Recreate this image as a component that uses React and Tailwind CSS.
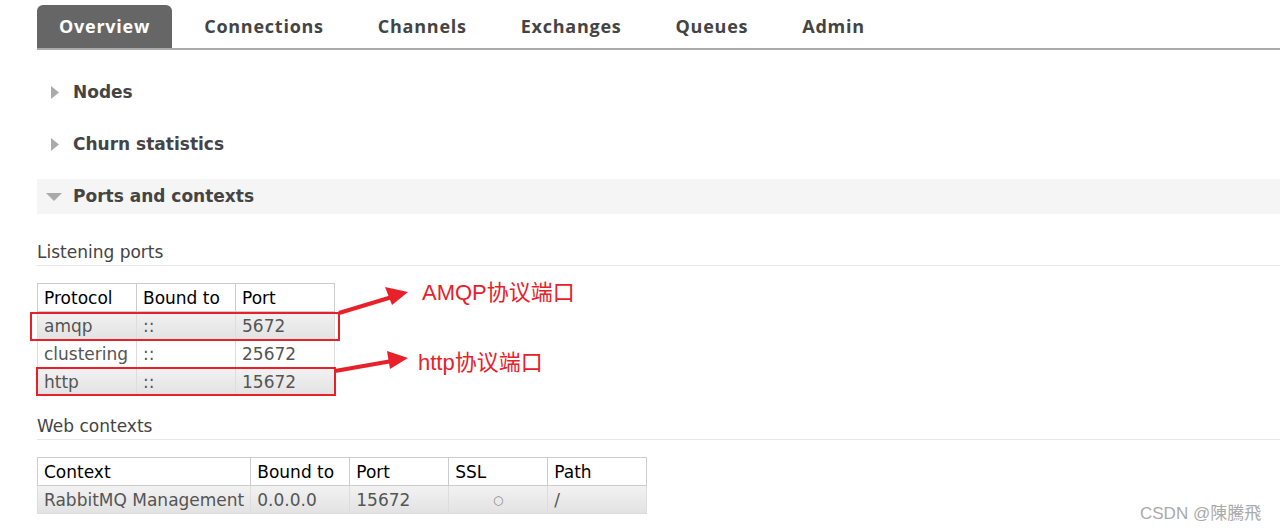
import React from 'react';

const tabs = ['Overview', 'Connections', 'Channels', 'Exchanges', 'Queues', 'Admin'];

const ports = [
    { protocol: 'amqp', bound: '::', port: '5672' },
    { protocol: 'clustering', bound: '::', port: '25672' },
    { protocol: 'http', bound: '::', port: '15672' },
];

// right / down pointing triangles used by the collapsible sections
const Arrow = ({ open }) => (
    open ? (
        <svg width="18" height="10" viewBox="0 0 18 10" className="mr-[10px] ml-[8px]">
            <polygon points="1,1 17,1 9,9" fill="#aaa" />
        </svg>
    ) : (
        <svg width="10" height="15" viewBox="0 0 10 15" className="mr-[13px] ml-[13px]">
            <polygon points="1,1 9,7.5 1,14" fill="#aaa" />
        </svg>
    )
);

const Section = ({ title, open }) => (
    <div className={`flex items-center h-[35px] ${open ? 'bg-[#f5f5f5]' : ''}`}>
        <Arrow open={open} />
        <span className="text-[17px] font-bold text-[#444]">{title}</span>
    </div>
);

const rowBg = 'bg-gradient-to-b from-[#f2f2f2] to-[#e2e2e2]';
const th = 'border border-[#ccc] px-[6px] text-left font-normal text-black';
const td = 'border border-[#ddd] px-[6px]';

const App = () => {
    return (
        <div
            className="relative w-[1280px] h-[532px] bg-white overflow-hidden pl-[37px] pt-[5px]"
            style={{ fontFamily: '"DejaVu Sans", Verdana, sans-serif' }}
        >
            {/* tab bar */}
            <div className="flex gap-[10px] border-b-2 border-[#aaa]" style={{ fontFamily: '"Open Sans", sans-serif' }}>
                {tabs.map((t, i) => (
                    <div
                        key={t}
                        className={`h-[43px] px-[22px] flex items-center text-[18px] tracking-[0.75px] font-bold rounded-t-[6px] ${i === 0 ? 'bg-[#666] text-white' : 'text-[#444]'}`}
                    >
                        {t}
                    </div>
                ))}
            </div>

            <div className="mt-[25px] flex flex-col gap-[17px]">
                <Section title="Nodes" />
                <Section title="Churn statistics" />
                <Section title="Ports and contexts" open />
            </div>

            <div className="mt-[28px] text-[17px] text-[#444] border-b border-[#e6e6e6] pb-[3px] leading-[20px]">
                Listening ports
            </div>

            <table className="mt-[17px] border-collapse text-[17px] leading-[20px]">
                <thead>
                    <tr className="h-[28px]">
                        <th className={`w-[99px] ${th}`}>Protocol</th>
                        <th className={`w-[99px] ${th}`}>Bound to</th>
                        <th className={`w-[99px] ${th}`}>Port</th>
                    </tr>
                </thead>
                <tbody>
                    {ports.map((p, i) => (
                        <tr key={p.protocol} className={`h-[28px] text-[#555] ${i % 2 === 0 ? rowBg : ''}`}>
                            <td className={td}>{p.protocol}</td>
                            <td className={td}>{p.bound}</td>
                            <td className={td}>{p.port}</td>
                        </tr>
                    ))}
                </tbody>
            </table>

            <div className="mt-[20px] text-[17px] text-[#444] border-b border-[#e6e6e6] pb-[3px] leading-[20px]">
                Web contexts
            </div>

            <table className="mt-[17px] border-collapse text-[17px] leading-[20px]">
                <thead>
                    <tr className="h-[28px]">
                        <th className={`w-[213px] ${th}`}>Context</th>
                        <th className={`w-[99px] ${th}`}>Bound to</th>
                        <th className={`w-[99px] ${th}`}>Port</th>
                        <th className={`w-[99px] ${th}`}>SSL</th>
                        <th className={`w-[99px] ${th}`}>Path</th>
                    </tr>
                </thead>
                <tbody>
                    <tr className={`h-[28px] text-[#555] ${rowBg}`}>
                        <td className={`${td} whitespace-nowrap`}>RabbitMQ Management</td>
                        <td className={td}>0.0.0.0</td>
                        <td className={td}>15672</td>
                        <td className={`${td} text-center text-[12px] text-[#888]`}>○</td>
                        <td className={td}>/</td>
                    </tr>
                </tbody>
            </table>

            {/* red annotations */}
            <div className="absolute left-[30px] top-[312px] w-[310px] h-[29px] border-2 border-[#e8202a]" />
            <div className="absolute left-[36px] top-[367px] w-[300px] h-[29px] border-2 border-[#e8202a]" />
            <svg className="absolute left-0 top-0" width="1280" height="532">
                <line x1="339" y1="313" x2="392" y2="297" stroke="#e8202a" strokeWidth="4" />
                <polygon points="408,292 385,287 392,305" fill="#e8202a" />
                <line x1="335" y1="371" x2="392" y2="361" stroke="#e8202a" strokeWidth="4" />
                <polygon points="408,358 387,351 390,369" fill="#e8202a" />
            </svg>
            <div
                className="absolute left-[422px] top-[280px] text-[22px] text-[#e8202a] leading-[26px]"
                style={{ fontFamily: '"Liberation Sans", "Noto Sans CJK SC", sans-serif' }}
            >
                AMQP协议端口
            </div>
            <div
                className="absolute left-[418px] top-[350px] text-[22px] text-[#e8202a] leading-[26px]"
                style={{ fontFamily: '"Liberation Sans", "Noto Sans CJK SC", sans-serif' }}
            >
                http协议端口
            </div>

            <div
                className="absolute left-[1140px] top-[503px] text-[17px] text-[#aaa] leading-[22px]"
                style={{ fontFamily: '"Liberation Sans", "Noto Sans CJK TC", sans-serif' }}
            >
                CSDN @陳騰飛
            </div>
        </div>
    );
};

export default App;
